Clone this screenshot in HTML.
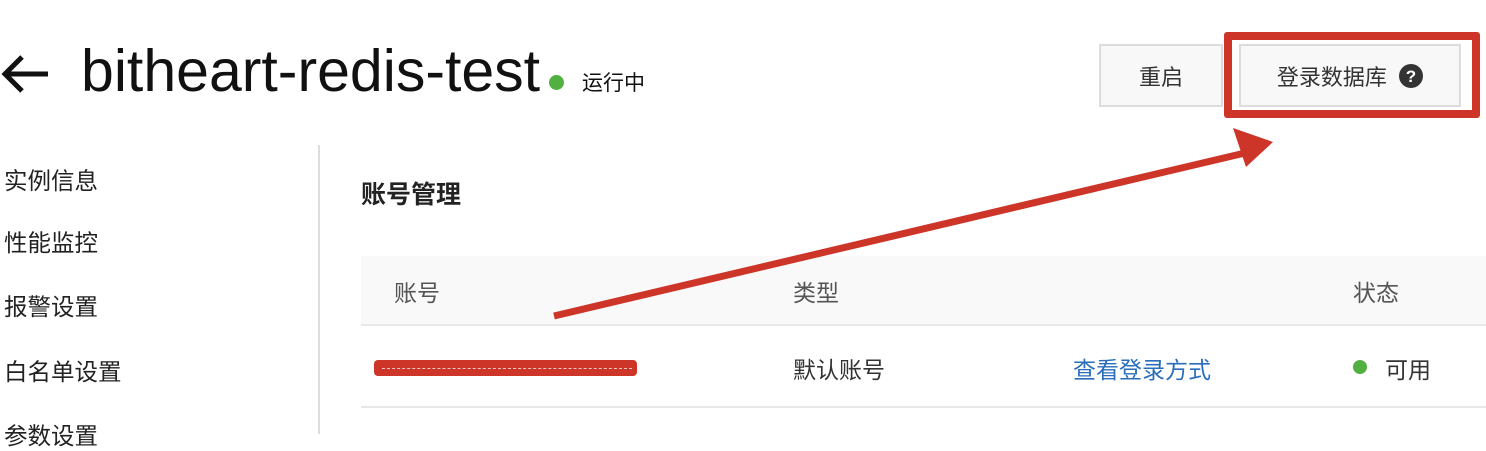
<!DOCTYPE html>
<html><head><meta charset="utf-8"><style>
body{margin:0;width:1486px;height:434px;overflow:hidden;background:#fff;font-family:"Liberation Sans","Noto Sans CJK SC",sans-serif;color:#222;position:relative}
.a{position:absolute;white-space:nowrap}
.side{font-size:23.5px;color:#222;left:4px}
.btn{position:absolute;background:#f8f8f8;border:2px solid #dcdcdc;box-sizing:border-box;font-size:22px;color:#333;display:flex;align-items:center;justify-content:center}
</style></head><body>
<svg class="a" style="left:0;top:52px" width="52" height="44" viewBox="0 0 52 44"><path d="M48 22H6M22 5L5 22L22 39" stroke="#111" stroke-width="5" fill="none"/></svg>
<div class="a" style="left:81px;top:36px;font-size:59px;line-height:70px;color:#111">bitheart-redis-test</div>
<div class="a" style="left:549px;top:75px;width:15px;height:15px;border-radius:50%;background:#52b043"></div>
<div class="a" style="left:582px;top:67px;font-size:21px;color:#111">运行中</div>
<div class="btn" style="left:1099px;top:44px;width:124px;height:63px">重启</div>
<div class="btn" style="left:1239px;top:44px;width:222px;height:63px">登录数据库&nbsp;&nbsp;<svg width="24" height="24" viewBox="0 0 24 24"><circle cx="12" cy="12" r="12" fill="#333"/><text x="12" y="18" font-size="17" font-weight="bold" fill="#fff" text-anchor="middle" font-family="Liberation Sans">?</text></svg></div>
<div class="a" style="left:1224px;top:32px;width:256px;height:86px;border:8px solid #cc3527;box-sizing:border-box;border-radius:3px"></div>
<div class="a side" style="top:162px">实例信息</div>
<div class="a side" style="top:224px">性能监控</div>
<div class="a side" style="top:288px">报警设置</div>
<div class="a side" style="top:353px">白名单设置</div>
<div class="a side" style="top:417px">参数设置</div>
<div class="a" style="left:318px;top:145px;width:2px;height:289px;background:#ddd"></div>
<div class="a" style="left:361px;top:175px;font-size:25px;font-weight:bold;color:#222">账号管理</div>
<div class="a" style="left:361px;top:256px;width:1125px;height:68px;background:#f9f9f9;border-bottom:2px solid #e8e8e8"></div>
<div class="a" style="left:394px;top:274px;font-size:23px;color:#555">账号</div>
<div class="a" style="left:793px;top:274px;font-size:23px;color:#555">类型</div>
<div class="a" style="left:1353px;top:274px;font-size:23px;color:#555">状态</div>
<div class="a" style="left:793px;top:351px;font-size:23px;color:#333">默认账号</div>
<div class="a" style="left:1073px;top:351px;font-size:23px;color:#2a6ebb">查看登录方式</div>
<div class="a" style="left:1353px;top:360px;width:14px;height:14px;border-radius:50%;background:#52b043"></div>
<div class="a" style="left:1385px;top:351px;font-size:23px;color:#333">可用</div>
<div class="a" style="left:374px;top:360px;width:263px;height:16px;background:#cc3527;border-radius:4px"></div>
<div class="a" style="left:382px;top:368px;width:250px;height:1px;border-top:1px dashed #f0c8c0"></div>
<div class="a" style="left:361px;top:406px;width:1125px;height:2px;background:#e8e8e8"></div>
<svg class="a" style="left:0;top:0" width="1486" height="434"><path d="M554 316L1245 153" stroke="#cc3527" stroke-width="7"/><path d="M1273 142L1233 128L1246 167Z" fill="#cc3527"/></svg>
</body></html>
